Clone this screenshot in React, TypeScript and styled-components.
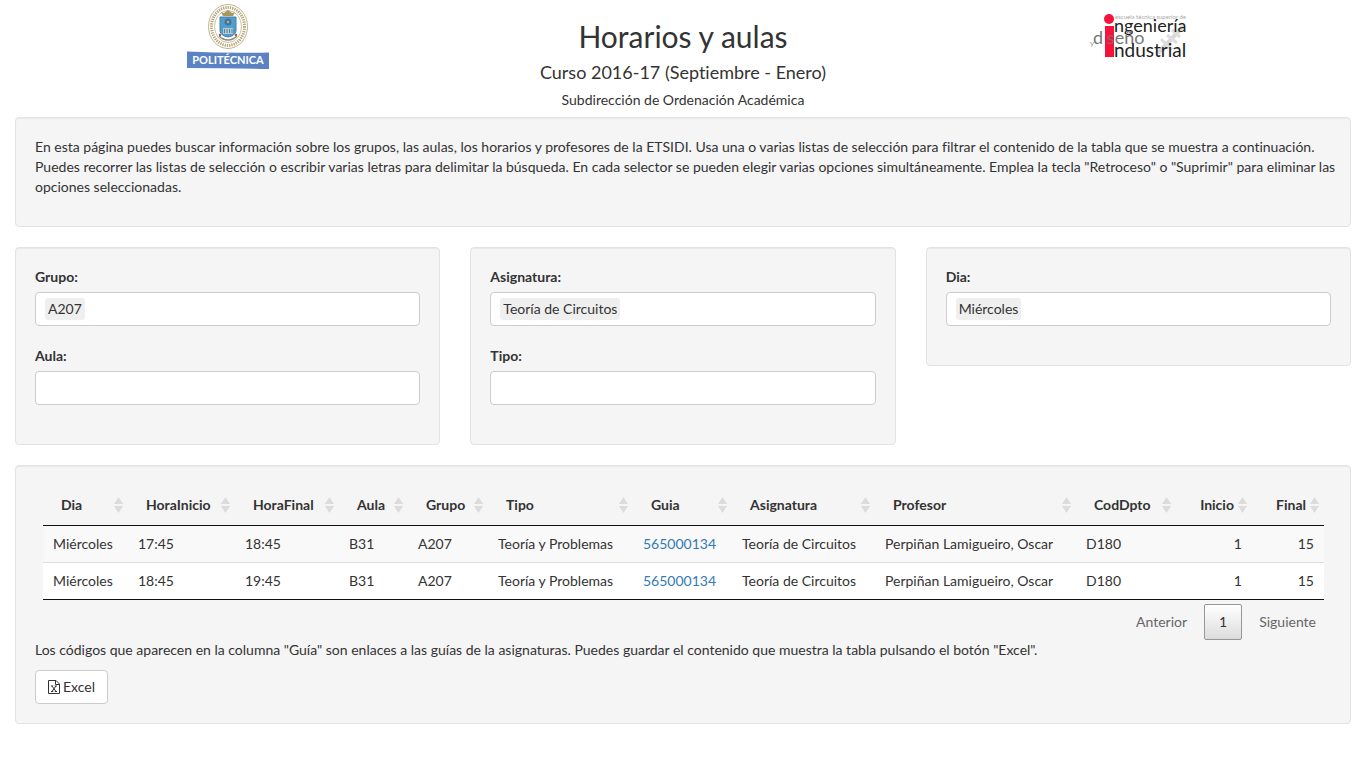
import React from "react";
import styled, { createGlobalStyle } from "styled-components";

const GlobalStyle = createGlobalStyle`
  *, *::before, *::after { box-sizing: border-box; }
  body {
    margin: 0;
    background: #fff;
    color: #333;
    font: 14px/20px Lato, "Liberation Sans", sans-serif;
    font-variant-ligatures: none;
  }
`;

const Page = styled.div`
  padding: 0 15px;
`;

const Header = styled.header`
  display: grid;
  grid-template-columns: 1fr 1fr 1fr;
  justify-items: center;
  align-items: start;
  margin: 0 -15px;
`;

const Titles = styled.div`
  text-align: center;
  padding-top: 16px;
`;

const Title = styled.h1`
  margin: 0;
  font-size: 30px;
  line-height: 40px;
  font-weight: 400;
`;

const Subtitle = styled.h2`
  margin: 6px 0 8px;
  font-size: 18px;
  line-height: 20px;
  font-weight: 400;
`;

const Department = styled.p`
  margin: 0;
  padding-bottom: 7px;
`;

const Well = styled.section`
  padding: 19px;
  margin-bottom: 20px;
  background: #f5f5f5;
  border: 1px solid #e3e3e3;
  border-radius: 4px;
  box-shadow: inset 0 1px 1px rgba(0, 0, 0, 0.05);
`;

const Intro = styled.p`
  margin: 0 -10px 10px 0;
`;

const Filters = styled.div`
  display: grid;
  grid-template-columns: repeat(3, 1fr);
  gap: 30px;
  align-items: start;
`;

const Field = styled.div`
  display: flex;
  flex-direction: column;
  gap: 5px;
  margin-bottom: 20px;
`;

const FieldLabel = styled.label`
  font-weight: 700;
`;

const Selector = styled.div`
  display: flex;
  align-items: center;
  height: 34px;
  padding: 0 9px;
  background: #fff;
  border: 1px solid #ccc;
  border-radius: 4px;
`;

const Chip = styled.span`
  padding: 1px 3px;
  background: #efefef;
  border-radius: 3px;
`;

const SelectorInput = styled.input`
  flex: 1;
  min-width: 0;
  border: 0;
  outline: 0;
  background: transparent;
  font: inherit;
  color: inherit;
`;

const TableArea = styled.div`
  padding: 0 7px 0 8px;
`;

const Table = styled.table`
  width: 100%;
  table-layout: fixed;
  border-collapse: separate;
  border-spacing: 0;
  border-bottom: 1px solid #111;
`;

const HeadCell = styled.th<{ $numeric?: boolean }>`
  padding: 10px 18px;
  text-align: ${(p) => (p.$numeric ? "right" : "left")};
  border-bottom: 1px solid #111;
  position: relative;
  white-space: nowrap;
`;

const SortMark = styled.svg`
  position: absolute;
  right: 5px;
  top: 12px;
  width: 9px;
  height: 16px;
  fill: #dcdcdc;
`;

const Row = styled.tr`
  background: #fff;
  &:nth-child(odd) { background: #f9f9f9; }
  & + & > td { border-top: 1px solid #ddd; }
`;

const Cell = styled.td<{ $numeric?: boolean }>`
  padding: 8px 10px;
  text-align: ${(p) => (p.$numeric ? "right" : "left")};
  white-space: nowrap;
`;

const GuideLink = styled.a`
  color: #337ab7;
  text-decoration: none;
`;

const Pager = styled.nav`
  display: flex;
  justify-content: flex-end;
  align-items: center;
  gap: 9px;
  padding-top: 4px;
`;

const PageButton = styled.button<{ $current?: boolean }>`
  height: 36px;
  padding: 0 ${(p) => (p.$current ? "14px" : "7px")};
  font: inherit;
  color: ${(p) => (p.$current ? "#333" : "#666")};
  border: 1px solid ${(p) => (p.$current ? "#979797" : "transparent")};
  border-radius: 2px;
  background: ${(p) => (p.$current ? "linear-gradient(#fff, #dcdcdc)" : "transparent")};
`;

const Note = styled.p`
  margin: 0 0 10px;
`;

const ExcelButton = styled.button`
  display: inline-flex;
  align-items: center;
  gap: 3px;
  height: 34px;
  padding: 0 12px;
  font: inherit;
  color: #333;
  background: #fff;
  border: 1px solid #ccc;
  border-radius: 4px;
`;

const UpmFrame = styled.svg`
  width: 84px;
  height: 68px;
  margin-top: 3px;
`;

const SchoolFrame = styled.svg`
  width: 100px;
  height: 48px;
  margin-top: 12px;
`;

const LogoText = styled.text`
  font-family: Lato, "Liberation Sans", sans-serif;
`;

function UpmLogo() {
  return (
    <UpmFrame viewBox="0 0 84 68" role="img" aria-label="Politécnica">
      <ellipse cx="42" cy="23.500" rx="19.500" ry="22" fill="#fff" stroke="#c3b48a" strokeWidth="1" />
      <ellipse cx="42" cy="23.500" rx="16.500" ry="19" fill="none" stroke="#b5a67e" strokeWidth="3" strokeDasharray="1.300 1" />
      <ellipse cx="42" cy="23.500" rx="13.500" ry="16" fill="#fff" stroke="#cfc29e" strokeWidth="1" />
      <path d="M37 13l-2-4 3 1 4-3 4 3 3-1-2 4z" fill="#a8975c" />
      <path d="M34 14h16v14q-1 5-8 6-7-1-8-6z" fill="#4d9fd3" stroke="#4f7f9e" strokeWidth="1" />
      <circle cx="42" cy="19" r="3.500" fill="#4b7391" />
      <circle cx="42" cy="19" r="1.200" fill="#b9b27c" />
      <path d="M37 25h10v6H37z" fill="#b4cad4" />
      <path d="M38.500 26v4M41 26v4M43.500 26v4M46 26v4" stroke="#587f96" strokeWidth="1" />
      <path d="M33 33q4 4 9 4t9-4" stroke="#8b8b76" strokeWidth="1.500" fill="none" />
      <circle cx="34" cy="32" r="1.200" fill="#b5543c" />
      <circle cx="50" cy="32" r="1.200" fill="#b5543c" />
      <path d="M1 48.500q41 2 82 1v16.500q-41-1-82-1z" fill="#5b83c3" />
      <LogoText x="42" y="61" textAnchor="middle" fill="#fff" fontWeight="700" fontSize="11">POLITÉCNICA</LogoText>
    </UpmFrame>
  );
}

function SchoolLogo() {
  return (
    <SchoolFrame viewBox="0 0 100 48" role="img" aria-label="Escuela técnica superior de ingeniería y diseño industrial">
      <path d="M70 41l21-22 4-5" stroke="#d9d9d9" strokeWidth="4" fill="none" />
      <path d="M73 27l11 11M79 23l10 8M84 18l8 7" stroke="#dedede" strokeWidth="3" fill="none" />
      <LogoText x="27" y="7" fill="#aaa" fontSize="6">escuela técnica superior de</LogoText>
      <LogoText x="26" y="20" fill="#222" fontSize="18">ngeniería</LogoText>
      <LogoText x="2" y="34" fill="#999" fontSize="8">y</LogoText>
      <LogoText x="5" y="32" fill="#777" fontSize="18">d</LogoText>
      <circle cx="21" cy="7" r="5" fill="#f5123d" />
      <path d="M17 14h9v31H17z" fill="#f5123d" />
      <LogoText x="19" y="32" fill="#777" fontSize="18">seño</LogoText>
      <path d="M19 32v-9h7v9z" fill="#f5123d" fillOpacity="0.2" />
      <LogoText x="26" y="45" fill="#222" fontSize="19">ndustrial</LogoText>
    </SchoolFrame>
  );
}

function ExcelIcon() {
  return (
    <svg width="12" height="14" viewBox="0 0 12 14" fill="none" stroke="#333" aria-hidden="true">
      <path d="M.5.500h7.500l3.500 3.500v9.500H.500zM7.500.500v4h4" />
      <path d="M3 6h2.200M6.800 6H9M3 11.500h2.200M6.800 11.500H9M4 6l4 5.500M8 6l-4 5.500" />
    </svg>
  );
}

function FilterField({ id, label, value }: { id: string; label: string; value?: string }) {
  return (
    <Field>
      <FieldLabel htmlFor={id}>{label}</FieldLabel>
      <Selector>
        {value && <Chip>{value}</Chip>}
        <SelectorInput id={id} type="text" />
      </Selector>
    </Field>
  );
}

const columns: { name: string; width: number; numeric?: boolean }[] = [
  { name: "Dia", width: 85 },
  { name: "HoraInicio", width: 107 },
  { name: "HoraFinal", width: 104 },
  { name: "Aula", width: 69 },
  { name: "Grupo", width: 80 },
  { name: "Tipo", width: 145 },
  { name: "Guia", width: 99 },
  { name: "Asignatura", width: 143 },
  { name: "Profesor", width: 201 },
  { name: "CodDpto", width: 100 },
  { name: "Inicio", width: 76, numeric: true },
  { name: "Final", width: 72, numeric: true },
];
const totalWidth = columns.reduce((sum, c) => sum + c.width, 0);

const rows = [
  ["Miércoles", "17:45", "18:45", "B31", "A207", "Teoría y Problemas", "565000134", "Teoría de Circuitos", "Perpiñan Lamigueiro, Oscar", "D180", "1", "15"],
  ["Miércoles", "18:45", "19:45", "B31", "A207", "Teoría y Problemas", "565000134", "Teoría de Circuitos", "Perpiñan Lamigueiro, Oscar", "D180", "1", "15"],
];

export default function App() {
  return (
    <>
      <GlobalStyle />
      <Page>
        <Header>
          <UpmLogo />
          <Titles>
            <Title>Horarios y aulas</Title>
            <Subtitle>Curso 2016-17 (Septiembre - Enero)</Subtitle>
            <Department>Subdirección de Ordenación Académica</Department>
          </Titles>
          <SchoolLogo />
        </Header>

        <Well>
          <Intro>
            En esta página puedes buscar información sobre los grupos, las aulas, los horarios y profesores de la ETSIDI. Usa una o varias listas de selección para filtrar el contenido de la tabla que se muestra a continuación. Puedes recorrer las listas de selección o escribir varias letras para delimitar la búsqueda. En cada selector se pueden elegir varias opciones simultáneamente. Emplea la tecla "Retroceso" o "Suprimir" para eliminar las opciones seleccionadas.
          </Intro>
        </Well>

        <Filters>
          <Well>
            <FilterField id="grupo" label="Grupo:" value="A207" />
            <FilterField id="aula" label="Aula:" />
          </Well>
          <Well>
            <FilterField id="asignatura" label="Asignatura:" value="Teoría de Circuitos" />
            <FilterField id="tipo" label="Tipo:" />
          </Well>
          <Well>
            <FilterField id="dia" label="Dia:" value="Miércoles" />
          </Well>
        </Filters>

        <Well>
          <TableArea>
            <Table>
              <colgroup>
                {columns.map((c) => (
                  <col key={c.name} style={{ width: `${(c.width / totalWidth) * 100}%` }} />
                ))}
              </colgroup>
              <thead>
                <tr>
                  {columns.map((c) => (
                    <HeadCell key={c.name} $numeric={c.numeric} scope="col">
                      {c.name}
                      <SortMark viewBox="0 0 9 16" aria-hidden="true">
                        <path d="M4.500 0L9 7H0zM4.500 16L9 9H0z" />
                      </SortMark>
                    </HeadCell>
                  ))}
                </tr>
              </thead>
              <tbody>
                {rows.map((row, i) => (
                  <Row key={i}>
                    {row.map((text, j) => (
                      <Cell key={j} $numeric={columns[j].numeric}>
                        {columns[j].name === "Guia" ? <GuideLink href="#guia">{text}</GuideLink> : text}
                      </Cell>
                    ))}
                  </Row>
                ))}
              </tbody>
            </Table>
            <Pager aria-label="Paginación">
              <PageButton type="button">Anterior</PageButton>
              <PageButton type="button" $current aria-current="page">1</PageButton>
              <PageButton type="button">Siguiente</PageButton>
            </Pager>
          </TableArea>
          <Note>
            Los códigos que aparecen en la columna "Guía" son enlaces a las guías de la asignaturas. Puedes guardar el contenido que muestra la tabla pulsando el botón "Excel".
          </Note>
          <ExcelButton type="button">
            <ExcelIcon />
            Excel
          </ExcelButton>
        </Well>
      </Page>
    </>
  );
}
